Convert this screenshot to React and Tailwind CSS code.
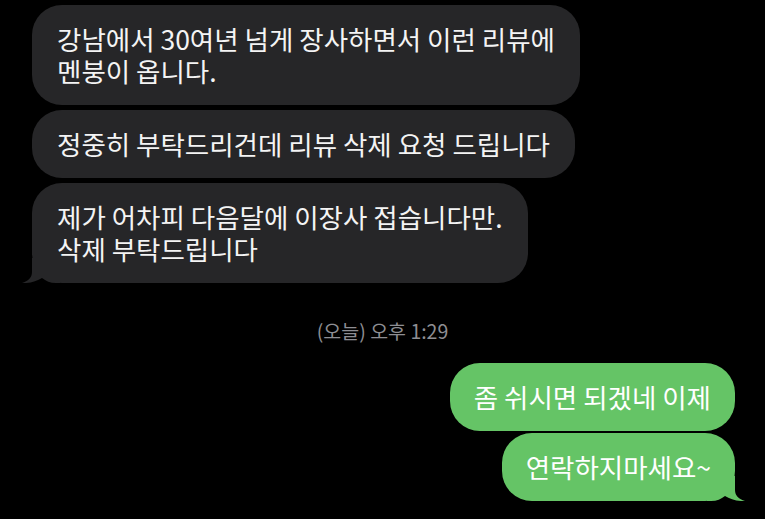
import React from "react";

const font = { fontFamily: '"Noto Sans CJK KR", "Noto Sans", sans-serif' };

function LeftTail() {
  return (
    <svg
      className="absolute left-[-10px] bottom-0"
      width="38"
      height="25"
      viewBox="0 0 38 25"
    >
      <path
        d="M10 0 L10 14 C10 20 6 23 0 25 C8 25.5 15 23 20 20 C24 23 28 25 34 25 L38 25 L38 0 Z"
        fill="#262628"
      />
    </svg>
  );
}

function RightTail() {
  return (
    <svg
      className="absolute right-[-10px] bottom-0"
      width="38"
      height="25"
      viewBox="0 0 38 25"
    >
      <path
        d="M28 0 L28 14 C28 20 32 23 38 25 C30 25.5 23 23 18 20 C14 23 10 25 4 25 L0 25 L0 0 Z"
        fill="#65c466"
      />
    </svg>
  );
}

function GrayBubble({ children, tail }) {
  return (
    <div className="relative self-start rounded-[30px] bg-[#262628] px-[25px] py-[18px] text-[26.5px] leading-[32px] text-[#f4f4f4] whitespace-nowrap">
      {tail && <LeftTail />}
      <span className="relative">{children}</span>
    </div>
  );
}

function GreenBubble({ children, tail }) {
  return (
    <div className="relative self-end rounded-[30px] bg-[#65c466] px-[24px] py-[18px] text-[26.5px] leading-[32px] text-white whitespace-nowrap">
      {tail && <RightTail />}
      <span className="relative">{children}</span>
    </div>
  );
}

export default function App() {
  return (
    <div
      className="w-[765px] h-[519px] bg-black overflow-hidden flex flex-col pt-[5px] pl-[32px] pr-[30px]"
      style={font}
    >
      <div className="flex flex-col gap-[5px]">
        <GrayBubble>
          강남에서 30여년 넘게 장사하면서 이런 리뷰에
          <br />
          멘붕이 옵니다.
        </GrayBubble>
        <GrayBubble>정중히 부탁드리건데 리뷰 삭제 요청 드립니다</GrayBubble>
        <GrayBubble tail>
          제가 어차피 다음달에 이장사 접습니다만.
          <br />
          삭제 부탁드립니다
        </GrayBubble>
      </div>
      <div className="mt-[35px] text-center text-[19.5px] leading-[26px] text-[#8e8e93] -ml-[32px] -mr-[30px]">
        (오늘) 오후 1:29
      </div>
      <div className="mt-[19px] flex flex-col gap-[2px]">
        <GreenBubble>좀 쉬시면 되겠네 이제</GreenBubble>
        <GreenBubble tail>연락하지마세요~</GreenBubble>
      </div>
    </div>
  );
}
